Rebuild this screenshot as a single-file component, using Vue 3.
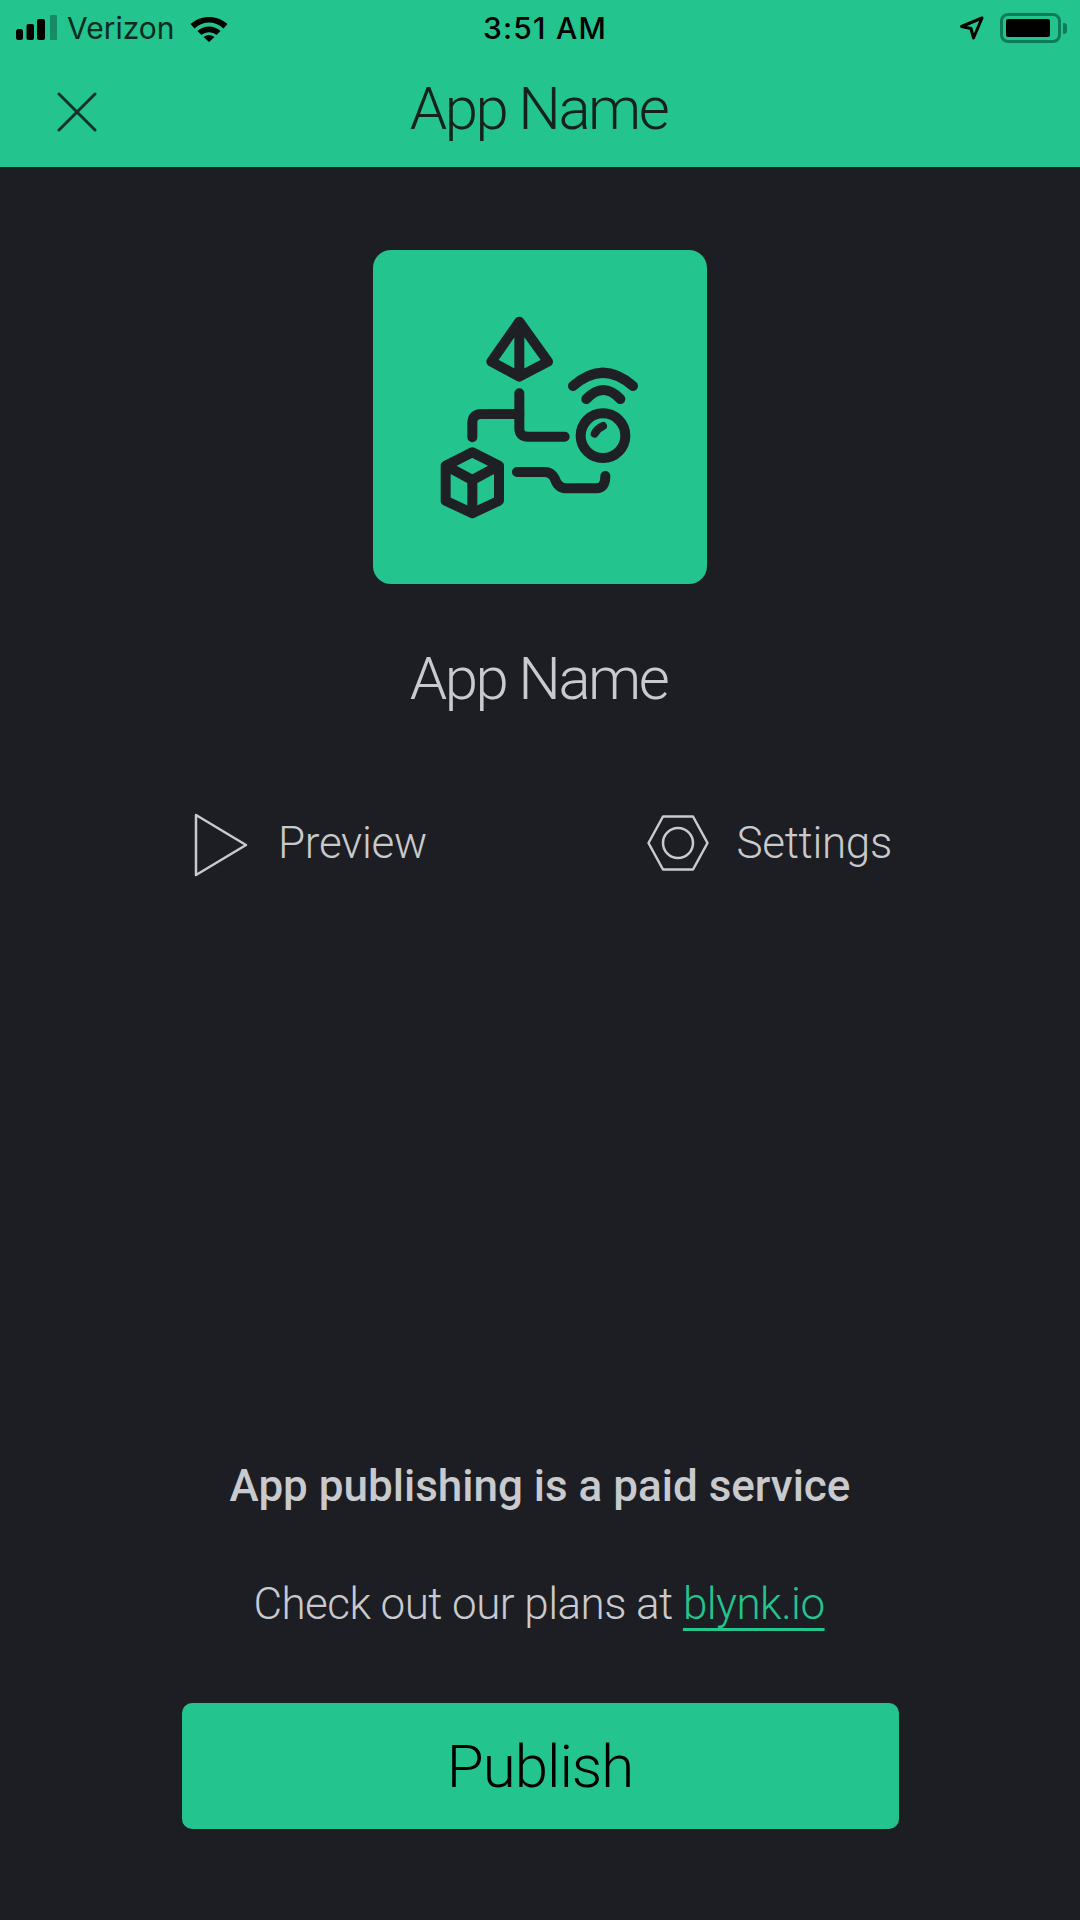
<template>
  <div class="page">
    <header class="top">
      <div class="status">
        <div class="status-left">
          <svg class="signal" width="42" height="26" viewBox="0 0 42 26">
            <rect x="0" y="14" width="7" height="11" rx="2.5" fill="#000" />
            <rect x="10.5" y="9" width="7.5" height="16" rx="2" fill="#000" />
            <rect x="21" y="4" width="8" height="21" rx="2" fill="#000" />
            <rect x="34" y="0" width="7" height="25" rx="1" fill="#178a66" />
          </svg>
          <span class="carrier">Verizon</span>
          <svg class="wifi" width="38" height="27" viewBox="0 0 38 27">
            <path d="M0.500 9 C11 -0.500 27 -0.500 37.500 9 L33.500 13.400 C24.500 5.600 13.500 5.600 4.500 13.400 Z" fill="#000" />
            <path d="M7.500 16 C14 10 24 10 30.500 16 L26.500 20 C22 16.200 16 16.200 11.500 20 Z" fill="#000" />
            <path d="M13.500 22 C17 19.200 21 19.200 24.500 22 L19 27 Z" fill="#000" />
          </svg>
        </div>
        <span class="time">3:51 AM</span>
        <div class="status-right">
          <svg class="arrow" width="25" height="24" viewBox="0 0 25 24">
            <path d="M23 2 L2.500 10.500 L12 12.500 L14.500 22 Z" fill="none" stroke="#000" stroke-width="3" stroke-linejoin="round" />
          </svg>
          <div class="battery"><div class="battery-fill"></div></div>
          <div class="battery-nub"></div>
        </div>
      </div>
      <div class="bar">
        <svg class="close" width="40" height="40" viewBox="0 0 40 40">
          <path d="M2 2 L38 38 M38 2 L2 38" stroke="#16302b" stroke-width="3" stroke-linecap="round" />
        </svg>
        <h1 class="bar-title">{{ appName }}</h1>
      </div>
    </header>

    <main class="body">
      <div class="tile">
        <svg width="334" height="334" viewBox="40 30 1002 1002" fill="none" stroke="#1e2025" stroke-width="30" stroke-linecap="round" stroke-linejoin="round">
          <path d="M479 245 L395 365 L479 410 L565 365 Z M479 245 V410" />
          <path d="M640 438 Q730 358 820 438" />
          <path d="M680 477 Q731 423 782 477" />
          <circle cx="730" cy="587" r="67" />
          <path d="M705 581 Q713 565 730 558" stroke-width="24" />
          <path d="M479 460 V565 Q479 590 505 590 H615" />
          <path d="M479 522 H365 Q338 522 338 550 V592" />
          <path d="M338 637 L418 677 V782 L338 820 L258 782 V677 Z M258 677 L338 720 L418 677 M338 720 V820" />
          <path d="M472 696 H555 Q575 696 585 715 Q595 745 620 745 H710 Q737 745 737 708" />
        </svg>
      </div>

      <h2 class="app-name">{{ appName }}</h2>

      <div class="actions">
        <div class="action">
          <svg class="play" width="54" height="64" viewBox="0 0 54 64" fill="none" stroke="#c9cacd" stroke-width="2.500" stroke-linejoin="round">
            <path d="M2 2 L52 32 L2 62 Z" />
          </svg>
          <span>Preview</span>
        </div>
        <div class="action action-tight">
          <svg width="62" height="56" viewBox="0 0 62 56" fill="none" stroke="#c9cacd" stroke-width="2.500" stroke-linejoin="round">
            <path d="M16 1.500 H46 L60.500 28 L46 54.500 H16 L1.500 28 Z" />
            <circle cx="31" cy="28" r="15" />
          </svg>
          <span>Settings</span>
        </div>
      </div>

      <div class="foot">
        <p class="paid">App publishing is a paid service</p>
        <p class="plans">Check out our plans at <a class="link">blynk.io</a></p>
        <button class="publish">Publish</button>
      </div>
    </main>
  </div>
</template>

<script setup>
const appName = 'App Name'
</script>

<style>
html, body {
  margin: 0;
  background: #1d1e23;
}
</style>

<style scoped>
.page {
  width: 1080px;
  height: 1920px;
  display: flex;
  flex-direction: column;
  background: #1d1e23;
  font-family: Roboto, "Liberation Sans", sans-serif;
  font-weight: 300;
  color: #c9cacd;
  overflow: hidden;
}
.top {
  height: 167px;
  background: #23c48e;
  display: flex;
  flex-direction: column;
}
.status {
  height: 56px;
  display: grid;
  grid-template-columns: 1fr auto 1fr;
  align-items: center;
  padding: 0 13px 0 16px;
  color: #000;
}
.status-left, .status-right {
  display: flex;
  align-items: center;
}
.status-right {
  justify-content: flex-end;
}
.signal {
  margin-right: 9px;
}
.carrier {
  font-family: Inter, sans-serif;
  font-weight: 400;
  font-size: 30px;
  color: #0b2a20;
}
.wifi {
  margin-left: 15px;
}
.time {
  margin-left: 7px;
  font-family: Inter, sans-serif;
  font-weight: 500;
  font-size: 30px;
  letter-spacing: 1.2px;
}
.arrow {
  margin-right: 16px;
}
.battery {
  width: 61px;
  height: 30px;
  box-sizing: border-box;
  border: 3px solid #0e7c5b;
  border-radius: 8px;
  padding: 3px;
}
.battery-fill {
  width: 44px;
  height: 18px;
  background: #000;
  border-radius: 2px;
}
.battery-nub {
  width: 4px;
  height: 11px;
  margin-left: 2px;
  background: #0e7c5b;
  border-radius: 0 3px 3px 0;
}
.bar {
  flex: 1;
  display: flex;
  align-items: center;
  justify-content: center;
  position: relative;
}
.close {
  position: absolute;
  left: 57px;
  top: 36px;
}
.bar-title {
  margin: 0 3px 7px 0;
  font-size: 60px;
  font-weight: 300;
  letter-spacing: -2.500px;
  color: #15211f;
}
.body {
  flex: 1;
  display: flex;
  flex-direction: column;
  align-items: center;
}
.tile {
  width: 334px;
  height: 334px;
  margin-top: 83px;
  background: #23c48e;
  border-radius: 18px;
}
.tile svg {
  display: block;
}
.app-name {
  margin: 60px 3px 0 0;
  font-size: 60px;
  line-height: 70px;
  font-weight: 300;
  letter-spacing: -2.500px;
  color: #c9cacd;
}
.actions {
  align-self: stretch;
  display: flex;
  justify-content: space-between;
  padding: 0 188px 0 194px;
  margin-top: 96px;
}
.action {
  display: flex;
  align-items: center;
  gap: 30px;
  font-size: 44px;
  letter-spacing: -0.300px;
  height: 66px;
}
.action-tight {
  gap: 27px;
}
.play {
  margin-top: 4px;
}
.foot {
  margin-top: auto;
  align-self: stretch;
  display: flex;
  flex-direction: column;
  align-items: center;
  padding-bottom: 91px;
}
.paid {
  margin: 0;
  font-size: 44px;
  font-weight: 500;
  line-height: 56px;
}
.plans {
  margin: 62px 0 0;
  padding-right: 2px;
  font-size: 44px;
  line-height: 56px;
  letter-spacing: -0.550px;
}
.link {
  color: #23c48e;
  text-decoration: underline;
  text-underline-offset: 8.500px;
  text-decoration-thickness: 3px;
}
.publish {
  width: 717px;
  height: 126px;
  margin-top: 71px;
  border: 0;
  border-radius: 10px;
  background: #23c48e;
  color: #000;
  font-family: inherit;
  font-weight: 300;
  font-size: 60px;
  letter-spacing: -1px;
}
</style>
